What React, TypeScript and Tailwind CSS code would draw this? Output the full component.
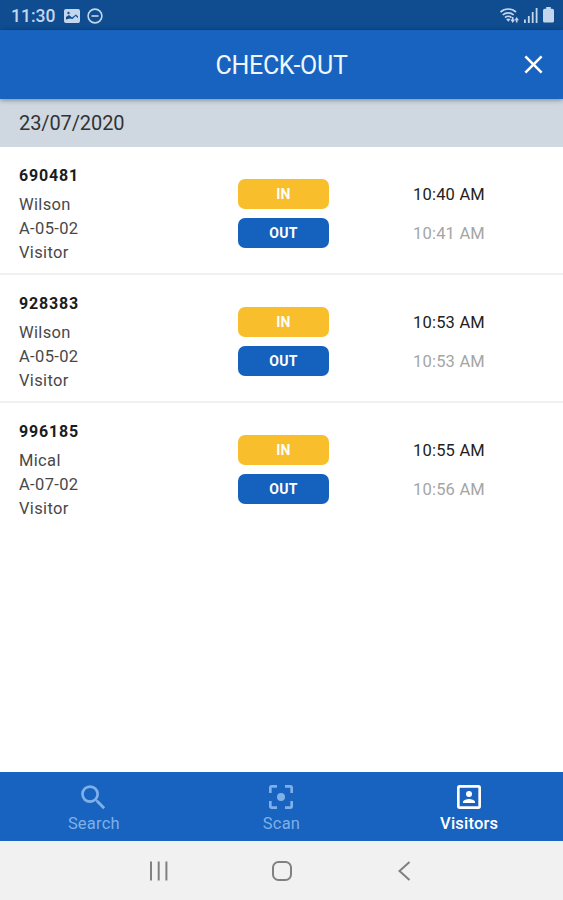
import { MdClose, MdSearch } from "react-icons/md";

const visitors = [
    { code: "690481", name: "Wilson", unit: "A-05-02", type: "Visitor", in: "10:40 AM", out: "10:41 AM" },
    { code: "928383", name: "Wilson", unit: "A-05-02", type: "Visitor", in: "10:53 AM", out: "10:53 AM" },
    { code: "996185", name: "Mical", unit: "A-07-02", type: "Visitor", in: "10:55 AM", out: "10:56 AM" },
];

function StatusBar() {
    return (
        <div className="h-[30px] shrink-0 bg-[#0f4d90] pl-[11px] pr-[9px] flex items-center justify-between text-[#c3d6ec]">
            <div className="flex items-center pt-[2px]">
                <span className="w-[46px] text-[17.5px] leading-5 font-medium whitespace-nowrap">11:30</span>
                {/* gallery */}
                <svg className="ml-[7px]" width="16" height="14" viewBox="0 0 16 14">
                    <rect width="16" height="14" rx="2" fill="currentColor" />
                    <path d="M2 11V8l3-2 3 2.5 4-3 2 2V11z" fill="#0f4d90" />
                    <path d="M2 12v-1.5l4-1 2.5.5 3-3L14 9v3z" fill="currentColor" />
                    <circle cx="4.5" cy="4" r="1.2" fill="#0f4d90" />
                </svg>
                {/* do not disturb */}
                <svg className="ml-[7px]" width="16" height="16" viewBox="0 0 16 16" fill="none" stroke="currentColor" strokeWidth="1.6">
                    <circle cx="8" cy="8" r="6.9" />
                    <path d="M4.5 8h7" />
                </svg>
            </div>
            <div className="flex items-center">
                <svg width="21" height="17" viewBox="0 0 20 17" fill="none" stroke="currentColor" strokeWidth="1.7">
                    <path d="M1 5a11.5 11.5 0 0 1 15.5 0M3.2 8a8 8 0 0 1 11 0M5.500 10.7a4.8 4.8 0 0 1 6.500 0" />
                    <path d="M8.8 14.7l-2.1-2.4a3.2 3.2 0 0 1 4.2 0z" fill="currentColor" stroke="none" />
                    <path d="M11.2 12.5h1.2V10H14v2.5h1.2v.6L13.2 16l-2-2.9zM15 13.3l2.2-3.3 2.2 3.3H18v2.2h-1.6v-2.2z" fill="currentColor" stroke="none" />
                </svg>
                <svg className="ml-[4px]" width="14" height="16" viewBox="0 0 14 16" fill="currentColor">
                    <path d="M0 12.5h1.8V16H0zM3.9 9h1.8v7H3.900zM7.8 5h1.8v11H7.800zM11.7 1h1.8v15h-1.8z" />
                </svg>
                <svg className="ml-[5px]" width="11" height="16" viewBox="0 0 11 16" fill="currentColor">
                    <path d="M3.2 0h4.6v1.8h1.4A1.8 1.8 0 0 1 11 3.6V14a1.6 1.6 0 0 1-1.6 1.6H1.6A1.6 1.6 0 0 1 0 14V3.6a1.8 1.8 0 0 1 1.8-1.8h1.4z" />
                </svg>
            </div>
        </div>
    );
}

function ScanIcon() {
    return (
        <svg width="32" height="32" viewBox="0 0 24 24" fill="currentColor">
            <path d="M3 5a2 2 0 0 1 2-2h4v2H5v4H3zM15 3h4a2 2 0 0 1 2 2v4h-2V5h-4zM19 15h2v4a2 2 0 0 1-2 2h-4v-2h4zM3 15h2v4h4v2H5a2 2 0 0 1-2-2z" />
            <circle cx="12" cy="12" r="3" />
        </svg>
    );
}

function VisitorsIcon() {
    return (
        <svg width="32" height="32" viewBox="0 0 24 24" fill="currentColor">
            <path
                fillRule="evenodd"
                d="M5 3h14a2 2 0 0 1 2 2v14a2 2 0 0 1-2 2H5a2 2 0 0 1-2-2V5a2 2 0 0 1 2-2zm0 2v14h14V5z"
            />
            <circle cx="12" cy="9.75" r="2.25" />
            <path d="M16.5 16.5v-.75c0-1.5-3-2.25-4.5-2.25s-4.5.75-4.5 2.25v.75z" />
        </svg>
    );
}

export default function App() {
    return (
        <div className="h-[900px] w-[563px] flex flex-col overflow-hidden bg-white font-['Roboto',sans-serif]">
            <StatusBar />
            <header className="relative z-10 h-[69px] shrink-0 bg-[#1763bf] grid grid-cols-[1fr_auto_1fr] items-center shadow-[0_1px_5px_rgba(0,0,0,0.4)]">
                <h1 className="col-start-2 pt-[2px] text-[25px] leading-8 tracking-[-0.3px] text-[#f0f6fc]">CHECK-OUT</h1>
                <button className="justify-self-end mr-[14px]">
                    <MdClose className="text-white" size={31} />
                </button>
            </header>

            <div className="h-12 shrink-0 bg-[#cfd8e0] px-[19px] flex items-center text-[20px] tracking-[-0.1px] text-[#333]">
                23/07/2020
            </div>

            <main className="flex-1">
                {visitors.map((item, i) => (
                    <div
                        key={item.code}
                        className={`h-32 px-[19px] grid grid-cols-[219px_175px_1fr] ${
                            i < visitors.length - 1 ? "border-b-2 border-[#f0f0f0]" : ""
                        }`}
                    >
                        <div className="pt-[17px] text-[16.5px] leading-6 tracking-[0.35px] text-[#484848]">
                            <p className="mb-[5px] text-[16px] font-bold tracking-[0.8px] text-[#1c1c1c]">{item.code}</p>
                            <p>{item.name}</p>
                            <p>{item.unit}</p>
                            <p>{item.type}</p>
                        </div>
                        <div className="pt-8 flex flex-col gap-[10px] text-[14px] font-bold tracking-[0.3px] text-white">
                            <span className="h-[30px] -mb-px w-[91px] rounded-[7px] bg-[#f8be2c] flex items-center justify-center">
                                IN
                            </span>
                            <span className="h-[30px] w-[91px] rounded-[7px] bg-[#1562be] flex items-center justify-center">
                                OUT
                            </span>
                        </div>
                        <div className="pt-9 text-[16.5px] leading-6 tracking-[0.2px]">
                            <p className="text-[#222]">{item.in}</p>
                            <p className="mt-[15px] text-[#a5a5a5]">{item.out}</p>
                        </div>
                    </div>
                ))}
            </main>

            <nav className="h-[69px] shrink-0 bg-[#1763bf] grid grid-cols-3 text-[16.5px] leading-5 tracking-[0.2px] text-[#7fb0e8]">
                <a className="flex flex-col items-center pt-[9px]">
                    <MdSearch size={33} />
                    <span>Search</span>
                </a>
                <a className="flex flex-col items-center pt-[9px]">
                    <ScanIcon />
                    <span className="mt-px">Scan</span>
                </a>
                <a className="flex flex-col items-center pt-[9px] text-white">
                    <VisitorsIcon />
                    <span className="mt-px font-medium">Visitors</span>
                </a>
            </nav>

            {/* android buttons */}
            <div className="h-[59px] shrink-0 bg-[#f1f1f1] pt-px flex items-center justify-center gap-[103px] text-[#808080]">
                <svg width="20" height="20" viewBox="0 0 20 20" stroke="currentColor" strokeWidth="2">
                    <path d="M2 .5v19M9.7 .5v19M17.4 .5v19" />
                </svg>
                <svg width="20" height="20" viewBox="0 0 20 20" fill="none" stroke="currentColor" strokeWidth="2">
                    <rect x="1" y="1" width="18" height="18" rx="5.5" />
                </svg>
                <svg width="20" height="20" viewBox="0 0 20 20" fill="none" stroke="currentColor" strokeWidth="2">
                    <path d="M14.5 1L4.5 10l10 9" />
                </svg>
            </div>
        </div>
    );
}
